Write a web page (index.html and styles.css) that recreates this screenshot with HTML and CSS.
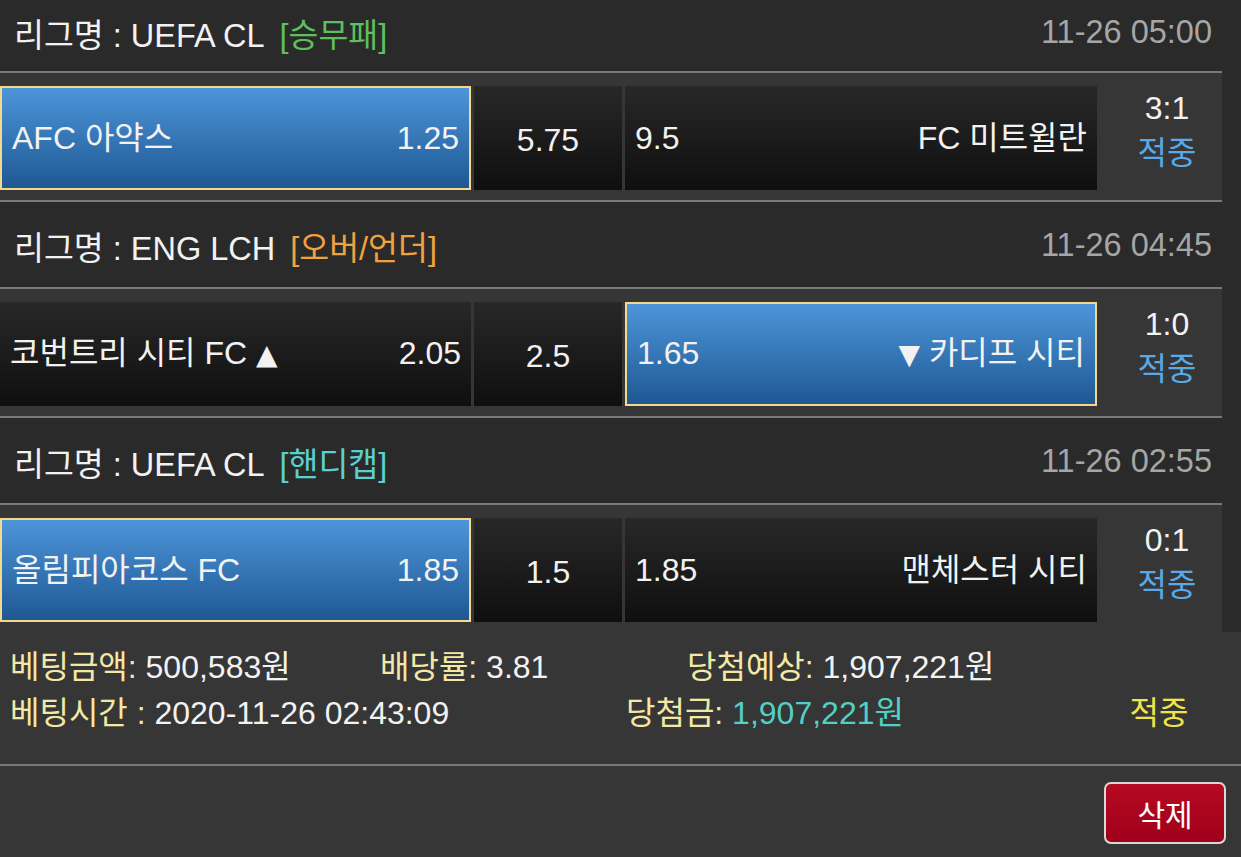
FILE: index.html
```html
<!DOCTYPE html>
<html lang="ko">
<head>
<meta charset="utf-8">
<title>베팅내역</title>
<link rel="stylesheet" href="styles.css">
</head>
<body>
<div class="page">
  <div class="matches">
    <section class="match">
      <div class="league league-first">
        <span class="league-name">리그명 : UEFA CL<span class="type type-win">[승무패]</span></span>
        <span class="time">11-26 05:00</span>
      </div>
      <div class="odds-row">
        <div class="cell cell-side selected"><div class="line"><span>AFC 아약스</span><span>1.25</span></div></div>
        <div class="cell cell-mid">5.75</div>
        <div class="cell cell-side"><div class="line"><span>9.5</span><span>FC 미트윌란</span></div></div>
        <div class="result"><div>3:1</div><div class="hit">적중</div></div>
      </div>
    </section>
    <section class="match">
      <div class="league">
        <span class="league-name">리그명 : ENG LCH<span class="type type-ou">[오버/언더]</span></span>
        <span class="time">11-26 04:45</span>
      </div>
      <div class="odds-row">
        <div class="cell cell-side"><div class="line"><span>코번트리 시티 FC <span class="tri">▲</span></span><span>2.05</span></div></div>
        <div class="cell cell-mid">2.5</div>
        <div class="cell cell-side selected"><div class="line"><span>1.65</span><span><span class="tri">▼</span> 카디프 시티</span></div></div>
        <div class="result"><div>1:0</div><div class="hit">적중</div></div>
      </div>
    </section>
    <section class="match">
      <div class="league">
        <span class="league-name">리그명 : UEFA CL<span class="type type-hc">[핸디캡]</span></span>
        <span class="time">11-26 02:55</span>
      </div>
      <div class="odds-row">
        <div class="cell cell-side selected"><div class="line"><span>올림피아코스 FC</span><span>1.85</span></div></div>
        <div class="cell cell-mid">1.5</div>
        <div class="cell cell-side"><div class="line"><span>1.85</span><span>맨체스터 시티</span></div></div>
        <div class="result"><div>0:1</div><div class="hit">적중</div></div>
      </div>
    </section>
  </div>
  <div class="summary">
    <div class="summary-line">
      <div class="item item-amount"><span class="label">베팅금액:</span> 500,583원</div>
      <div class="item item-rate"><span class="label">배당률:</span> 3.81</div>
      <div class="item"><span class="label">당첨예상:</span> 1,907,221원</div>
    </div>
    <div class="summary-line">
      <div class="item item-time"><span class="label">베팅시간 :</span> 2020-11-26 02:43:09</div>
      <div class="item item-win"><span class="label">당첨금:</span> <span class="win-amount">1,907,221원</span></div>
      <div class="item item-status">적중</div>
    </div>
  </div>
  <div class="actions">
    <button class="delete" type="button">삭제</button>
  </div>
</div>
</body>
</html>
```

FILE: styles.css
```css
* { box-sizing: border-box; }

html, body {
  margin: 0;
  padding: 0;
  background: #2b2b2b;
}

body {
  font-family: "Liberation Sans", Arial, "Noto Sans CJK KR", sans-serif;
  font-size: 32px;
  color: #f2f2f2;
  width: 1241px;
  height: 857px;
  overflow: hidden;
}

.matches {
  width: 1222px;
}

.league {
  height: 89px;
  border-top: 2px solid #7a7a7a;
  border-bottom: 2px solid #7a7a7a;
  background: #2a2a2a;
  display: flex;
  align-items: center;
  justify-content: space-between;
  padding: 2px 10px 0 14px;
  font-size: 32.5px;
  white-space: nowrap;
}

.league-first {
  height: 73px;
  border-top: 0;
  padding-top: 0;
  padding-bottom: 6px;
}

.type {
  margin-left: 15px;
}
.type-win { color: #5dbf5d; }
.type-ou { color: #f0a140; }
.type-hc { color: #5ccfd0; }

.time {
  color: #a6a6a6;
}

.odds-row {
  background: #363636;
  padding: 13px 0 10px;
  display: grid;
  grid-template-columns: 471px 148px 472px 1fr;
  column-gap: 3px;
  height: 127px;
}

.cell {
  height: 104px;
  background: linear-gradient(#282828, #0f0f0f);
  display: flex;
  align-items: center;
  white-space: nowrap;
}

.cell-side {
  padding: 0 10px;
}

.line {
  width: 100%;
  display: flex;
  justify-content: space-between;
  align-items: baseline;
  line-height: 40px;
}

.cell-mid {
  justify-content: center;
  padding-top: 4px;
}

.selected {
  background: linear-gradient(#4d95d9, #1e5893);
  border: 2px solid #f3d98e;
}

.tri {
  font-family: "DejaVu Sans", sans-serif;
  font-size: 28px;
}

.result {
  text-align: center;
  line-height: 45px;
  padding-left: 12px;
}

.hit {
  color: #5aa9e4;
}

.summary {
  width: 1241px;
  background: #363636;
  padding: 12px 0 28px 10px;
  border-bottom: 2px solid #7a7a7a;
}

.summary-line {
  display: flex;
  line-height: 46px;
  white-space: nowrap;
}

.label {
  color: #f3e8a6;
}

.item-amount { width: 370px; }
.item-rate { width: 307px; }
.item-time { width: 616px; }
.item-win { flex: 1; }
.item-status {
  width: 124px;
  text-align: center;
  margin-right: 20px;
  color: #f1e34a;
}

.win-amount {
  color: #54cfc6;
}

.actions {
  background: #363636;
  height: 91px;
  display: flex;
  justify-content: flex-end;
  align-items: flex-start;
  padding: 16px 15px 0 0;
}

.delete {
  width: 122px;
  height: 62px;
  background: linear-gradient(#b50a22, #a0001a);
  border: 2px solid #d9d9d9;
  border-radius: 7px;
  color: #ffffff;
  font-family: "Liberation Sans", "Noto Sans CJK KR", sans-serif;
  font-size: 30px;
  padding: 0;
}
```
